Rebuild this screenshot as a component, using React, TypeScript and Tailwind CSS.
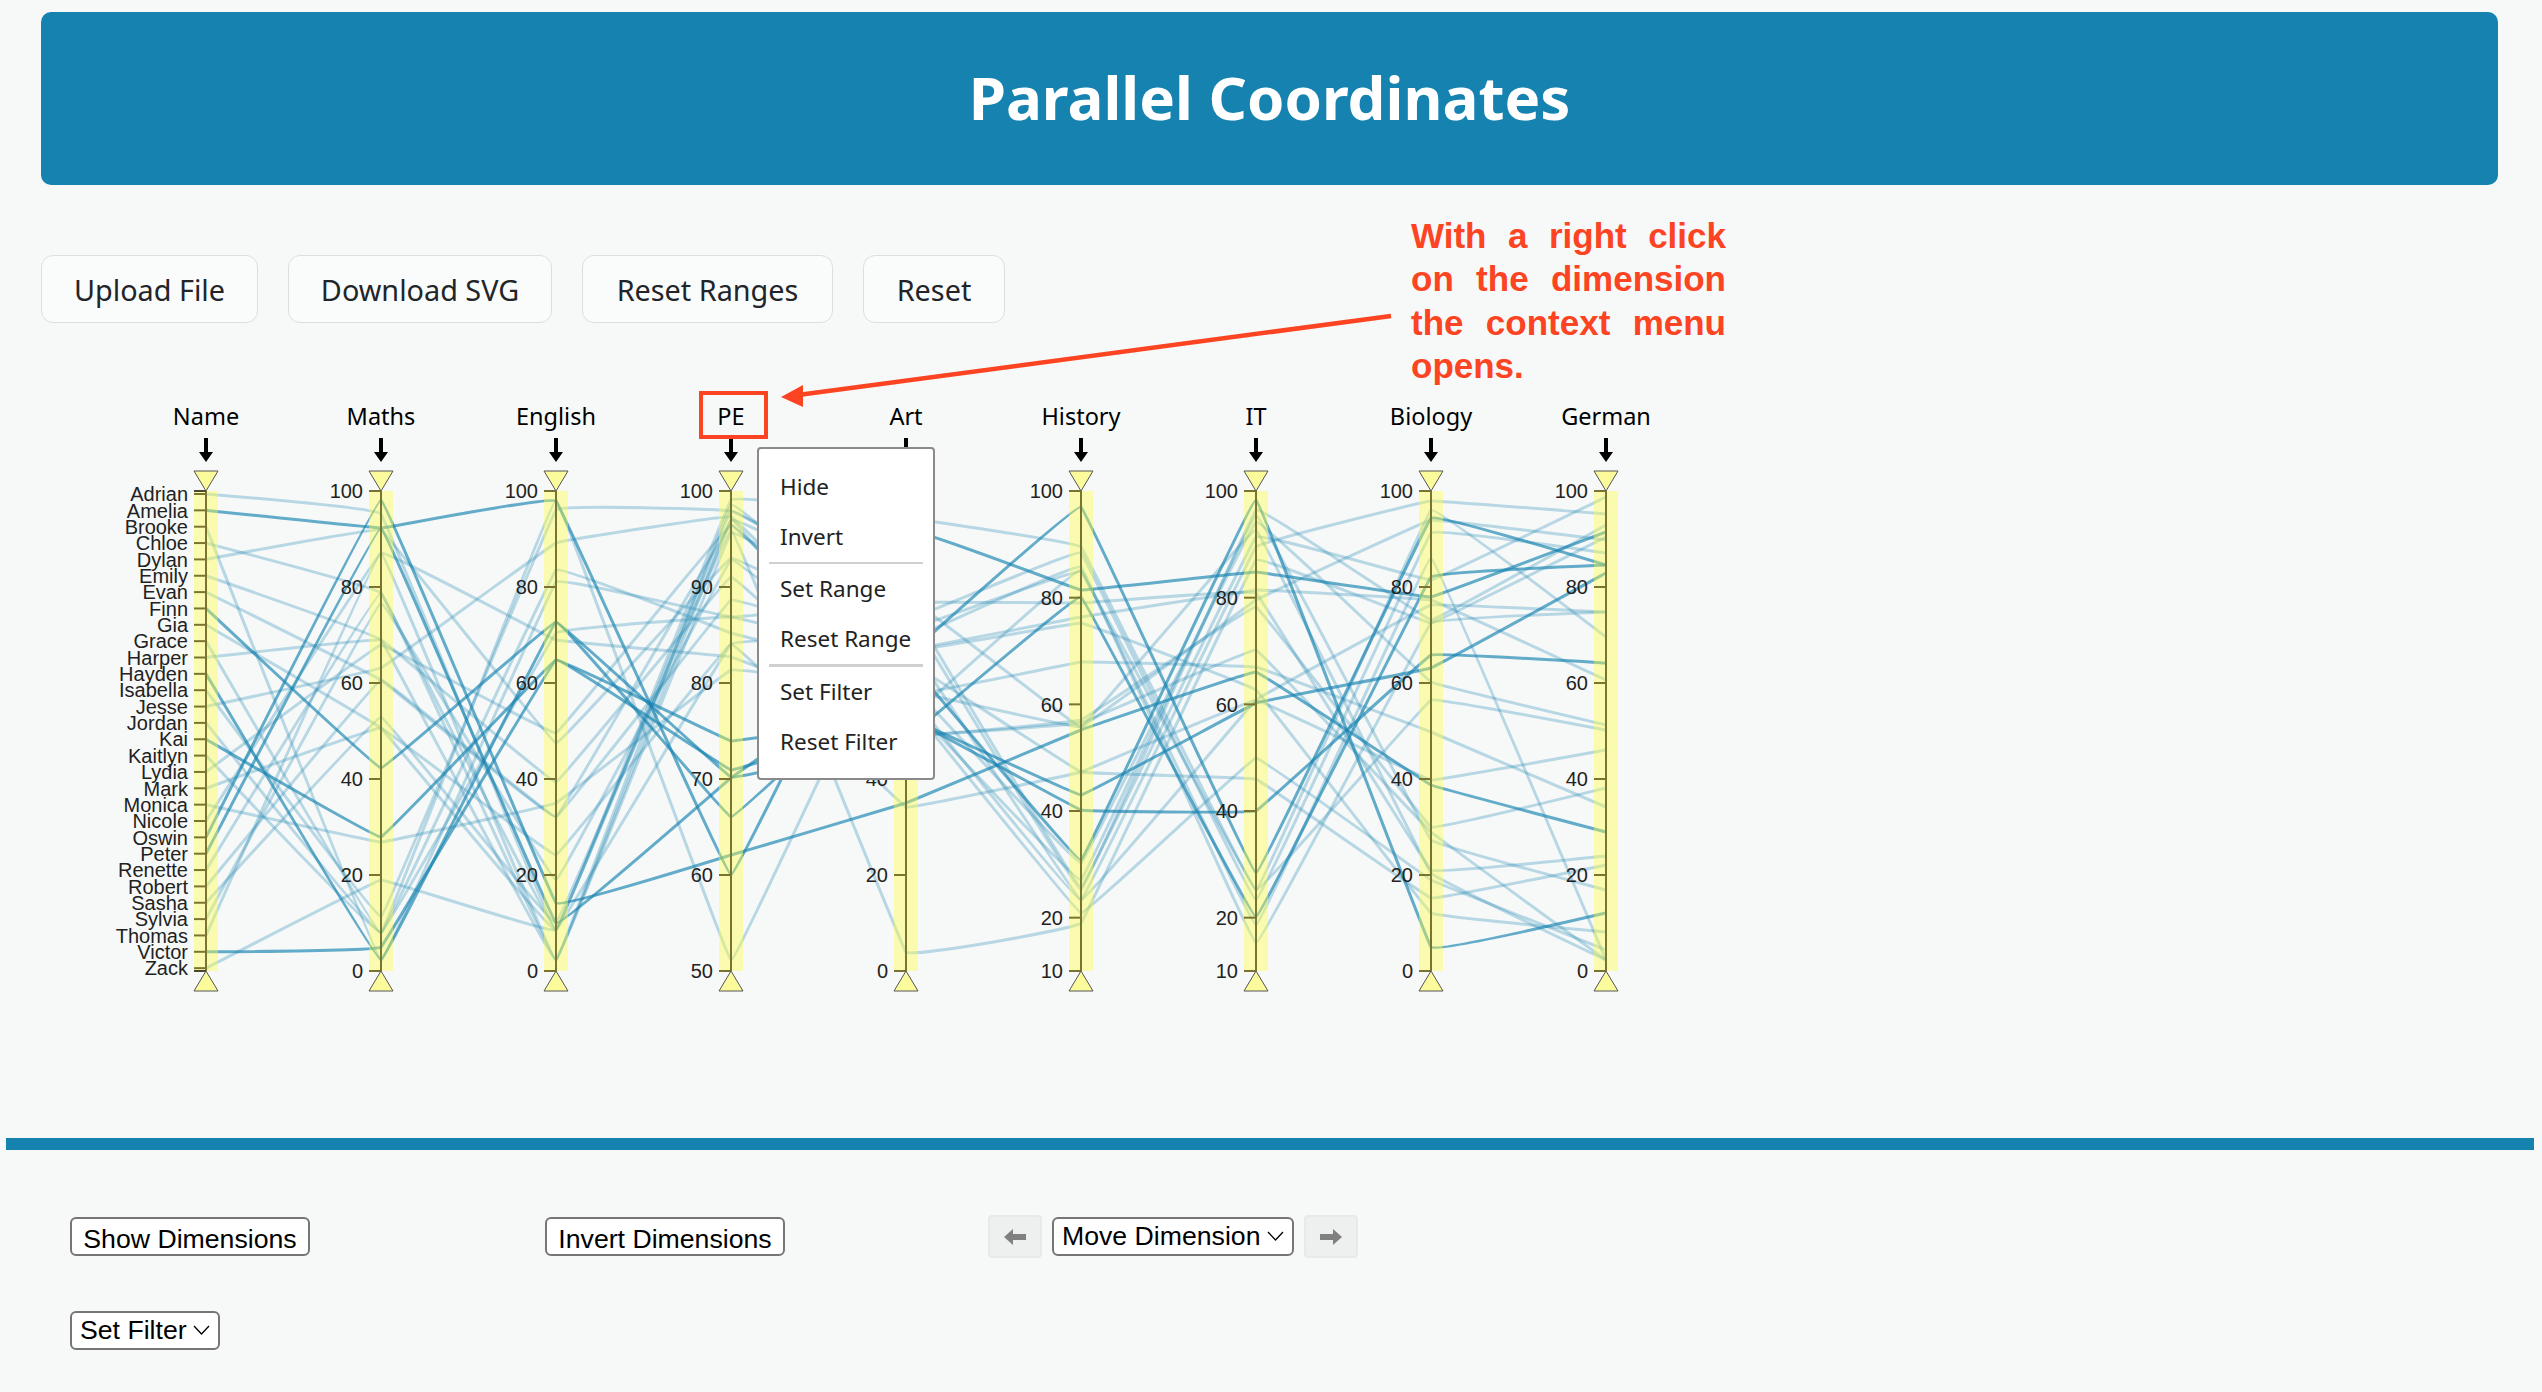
const LABEL_FONT = 'font-["Noto_Sans",sans-serif]';

const DIMENSIONS = ['Name', 'Maths', 'English', 'PE', 'Art', 'History', 'IT', 'Biology', 'German'];

const NAMES = [
  'Adrian', 'Amelia', 'Brooke', 'Chloe', 'Dylan', 'Emily', 'Evan', 'Finn', 'Gia', 'Grace',
  'Harper', 'Hayden', 'Isabella', 'Jesse', 'Jordan', 'Kai', 'Kaitlyn', 'Lydia', 'Mark', 'Monica',
  'Nicole', 'Oswin', 'Peter', 'Renette', 'Robert', 'Sasha', 'Sylvia', 'Thomas', 'Victor', 'Zack',
];

// y position on each numeric axis, Maths through German
const ROWS: Record<string, number[]> = {
  Adrian: [514, 930, 500, 518, 547, 890, 510, 637],
  Amelia: [528, 501, 875, 530, 590, 572, 597, 532],
  Brooke: [960, 582, 617, 602, 603, 593, 870, 856],
  Chloe: [593, 930, 511, 620, 553, 900, 533, 553],
  Dylan: [530, 743, 558, 640, 567, 943, 623, 612],
  Emily: [640, 960, 505, 651, 623, 690, 913, 932],
  Evan: [680, 817, 525, 695, 662, 667, 732, 807],
  Finn: [768, 622, 777, 739, 597, 917, 577, 565],
  Gia: [728, 930, 520, 735, 720, 607, 827, 788],
  Grace: [933, 570, 633, 680, 863, 522, 682, 725],
  Harper: [640, 782, 577, 735, 723, 650, 832, 960],
  Hayden: [960, 622, 817, 657, 507, 873, 518, 565],
  Isabella: [917, 510, 511, 600, 887, 537, 580, 497],
  Jesse: [668, 543, 517, 690, 900, 547, 501, 514],
  Jordan: [933, 633, 617, 660, 772, 779, 898, 865],
  Kai: [837, 660, 741, 717, 795, 703, 668, 573],
  Kaitlyn: [933, 500, 960, 598, 727, 530, 873, 960],
  Lydia: [645, 733, 525, 700, 913, 758, 880, 950],
  Mark: [728, 855, 644, 807, 772, 700, 780, 750],
  Monica: [842, 803, 670, 690, 727, 600, 520, 540],
  Nicole: [553, 640, 657, 720, 570, 925, 558, 960],
  Oswin: [500, 903, 855, 803, 730, 672, 785, 832],
  Peter: [528, 923, 778, 660, 860, 500, 947, 913],
  Renette: [593, 960, 533, 630, 572, 890, 700, 730],
  Robert: [680, 817, 600, 650, 617, 590, 600, 680],
  Sasha: [717, 923, 530, 952, 923, 560, 623, 537],
  Sylvia: [603, 880, 560, 700, 880, 515, 840, 890],
  Thomas: [553, 960, 520, 610, 890, 510, 620, 525],
  Victor: [947, 660, 770, 717, 810, 811, 655, 663],
  Zack: [880, 930, 644, 640, 900, 700, 605, 612],
};

const DARK = ['Amelia', 'Finn', 'Hayden', 'Kai', 'Oswin', 'Peter', 'Victor'];

const TICKS: Record<string, [number, number][]> = {
  Maths: [100, 80, 60, 40, 20, 0].map((v) => [v, 971 - v * 4.8]),
  English: [100, 80, 60, 40, 20, 0].map((v) => [v, 971 - v * 4.8]),
  PE: [100, 90, 80, 70, 60, 50].map((v) => [v, 971 - (v - 50) * 9.6]),
  // the upper ticks of Art sit behind the context menu
  Art: [40, 20, 0].map((v) => [v, 971 - v * 4.8]),
  History: [100, 80, 60, 40, 20, 10].map((v) => [v, 971 - (v - 10) * 5.333]),
  IT: [100, 80, 60, 40, 20, 10].map((v) => [v, 971 - (v - 10) * 5.333]),
  Biology: [100, 80, 60, 40, 20, 0].map((v) => [v, 971 - v * 4.8]),
  German: [100, 80, 60, 40, 20, 0].map((v) => [v, 971 - v * 4.8]),
};

const axisX = (index: number) => 206 + index * 175;
const nameY = (index: number) => 494 + index * 16.35;

function linePath(points: [number, number][]) {
  let d = `M${points[0][0]},${points[0][1]}`;
  for (let i = 0; i < points.length - 1; i++) {
    const p0 = points[Math.max(i - 1, 0)];
    const p1 = points[i];
    const p2 = points[i + 1];
    const p3 = points[Math.min(i + 2, points.length - 1)];
    const k = 0.015;
    d += ` C${p1[0] + (p2[0] - p0[0]) * k},${p1[1] + (p2[1] - p0[1]) * k} ${p2[0] - (p3[0] - p1[0]) * k},${p2[1] - (p3[1] - p1[1]) * k} ${p2[0]},${p2[1]}`;
  }
  return d;
}

function Chart() {
  return (
    <svg width="1700" height="620" viewBox="0 390 1700 620" className="block">
      {NAMES.map((name, nameIndex) => {
        const points: [number, number][] = [[axisX(0), nameY(nameIndex)]];
        ROWS[name].forEach((y, i) => points.push([axisX(i + 1), y]));
        return (
          <path
            key={name}
            d={linePath(points)}
            fill="none"
            stroke="#1582b0"
            strokeWidth="3"
            strokeOpacity={DARK.includes(name) ? 0.66 : 0.28}
          />
        );
      })}
      {DIMENSIONS.map((dimension, index) => {
        const x = axisX(index);
        const ticks: [string, number][] =
          dimension === 'Name'
            ? NAMES.map((name, i) => [name, nameY(i)])
            : TICKS[dimension].map(([v, y]) => [String(v), y]);
        return (
          <g key={dimension}>
            <rect x={x - 12} y="491" width="24" height="480" fill="#ffff40" fillOpacity="0.4" />
            <line x1={x} x2={x} y1="491" y2="971" stroke="#7b7431" strokeWidth="2" />
            <line x1={x - 12} x2={x} y1="491" y2="491" stroke="#4a4a2a" strokeWidth="2" />
            <line x1={x - 12} x2={x} y1="971" y2="971" stroke="#4a4a2a" strokeWidth="2" />
            {ticks.map(([label, y]) => (
              <g key={label}>
                <line x1={x - 12} x2={x} y1={y} y2={y} stroke="#7b7431" strokeWidth="2" />
                <text
                  x={x - 18}
                  y={y}
                  dy="0.36em"
                  textAnchor="end"
                  fontSize="20"
                  fill="#222"
                  fontFamily="'Liberation Sans', sans-serif"
                >
                  {label}
                </text>
              </g>
            ))}
            <polygon points={`${x - 12},471 ${x + 12},471 ${x},491`} fill="#fbfb9c" stroke="#555" strokeWidth="1" />
            <polygon points={`${x},971 ${x - 12},991 ${x + 12},991`} fill="#fbfb9c" stroke="#555" strokeWidth="1" />
            <path d={`M${x - 2},438 h4 v14 h5 l-7,10 l-7,-10 h5 z`} fill="#000" />
            <text x={x} y="417" dy="0.36em" textAnchor="middle" fontSize="23.5" fill="#000" fontFamily="'Noto Sans', sans-serif">
              {dimension}
            </text>
          </g>
        );
      })}
    </svg>
  );
}

function ContextMenu() {
  const item = `h-[50px] pl-[21px] leading-[50px] text-[22.5px] text-[#222] ${LABEL_FONT}`;
  return (
    <div className="absolute left-[757px] top-[447px] h-[333px] w-[178px] rounded-[4px] border-2 border-[#8a8a8a] bg-white pt-[13px]">
      <div className={item}>Hide</div>
      <div className={item}>Invert</div>
      <div className="mx-[10px] h-[2px] bg-[#d0d0d0]" />
      <div className={item}>Set Range</div>
      <div className={item}>Reset Range</div>
      <div className="mx-[10px] h-[3px] bg-[#d0d0d0]" />
      <div className={item}>Set Filter</div>
      <div className={item}>Reset Filter</div>
    </div>
  );
}

function Annotation() {
  return (
    <>
      <svg width="2542" height="460" className="pointer-events-none absolute left-0 top-0">
        <rect x="701" y="393" width="65" height="44" fill="none" stroke="#fc4423" strokeWidth="4" />
        <line x1="1391" y1="316" x2="798" y2="395" stroke="#fc4423" strokeWidth="4.5" />
        <polygon points="781,397 803,385 803,407" fill="#fc4423" />
      </svg>
      <p className="absolute left-[1411px] top-[214px] w-[315px] text-justify font-['Liberation_Sans',sans-serif] text-[35px] font-bold leading-[43.3px] text-[#fc4423]">
        With a right click on the dimension the context menu opens.
      </p>
    </>
  );
}

function Chevron() {
  return (
    <svg width="17" height="10" viewBox="0 0 17 10" fill="none" stroke="#000" strokeWidth="1.3">
      <path d="M1 1l7.5 8L16 1" />
    </svg>
  );
}

function ArrowButton({ direction }: { direction: 'left' | 'right' }) {
  return (
    <button
      type="button"
      className="flex h-[43px] w-[54px] items-center justify-center rounded-[4px] border-2 border-[#e8eaea] bg-[#eef0f0]"
    >
      <svg width="22" height="16" viewBox="0 0 22 16" fill="#808080">
        {direction === 'left' ? <path d="M0 8l9-8v5h13v6H9v5z" /> : <path d="M22 8l-9-8v5H0v6h13v5z" />}
      </svg>
    </button>
  );
}

export default function App() {
  const topButton = `h-[68px] rounded-[12px] border border-[#dcdfe1] bg-[#fafbfb] pt-[2px] text-[28.8px] text-[#212529] ${LABEL_FONT}`;
  const formControl =
    "h-[39px] rounded-[6px] border-2 border-[#767676] bg-white font-['Liberation_Sans',sans-serif] text-[26.67px] text-black";
  return (
    <div className="relative h-[1392px] overflow-hidden bg-[#f7f9f8]">
      <header className="mx-[41px] mt-[12px] flex h-[173px] w-[2457px] items-center justify-center rounded-[10px] bg-[#1582b0] pb-[3px]">
        <h1 className={`text-[60px] font-bold text-white ${LABEL_FONT}`}>Parallel Coordinates</h1>
      </header>

      <div className="ml-[41px] mt-[70px] flex gap-[30px]">
        <button type="button" className={`${topButton} w-[217px]`}>Upload File</button>
        <button type="button" className={`${topButton} w-[264px]`}>Download SVG</button>
        <button type="button" className={`${topButton} w-[251px]`}>Reset Ranges</button>
        <button type="button" className={`${topButton} w-[142px]`}>Reset</button>
      </div>

      <div className="mt-[67px]">
        <Chart />
      </div>

      <div className="ml-[6px] mt-[128px] h-[12px] w-[2528px] bg-[#1582b0]" />

      <div className="ml-[70px] mt-[65px] flex items-center">
        <button type="button" className={`${formControl} pb-[4px] w-[240px]`}>Show Dimensions</button>
        <button type="button" className={`${formControl} ml-[235px] pb-[4px] w-[240px]`}>Invert Dimensions</button>
        <div className="ml-[203px] flex items-center gap-[10px]">
          <ArrowButton direction="left" />
          <div className={`${formControl} flex w-[242px] items-center justify-between px-[8px] pb-[2px]`}>
            <span>Move Dimension</span>
            <Chevron />
          </div>
          <ArrowButton direction="right" />
        </div>
      </div>

      <div className={`${formControl} ml-[70px] mt-[53px] flex w-[150px] items-center justify-between px-[8px] pb-[2px]`}>
        <span>Set Filter</span>
        <Chevron />
      </div>

      <ContextMenu />
      <Annotation />
    </div>
  );
}
